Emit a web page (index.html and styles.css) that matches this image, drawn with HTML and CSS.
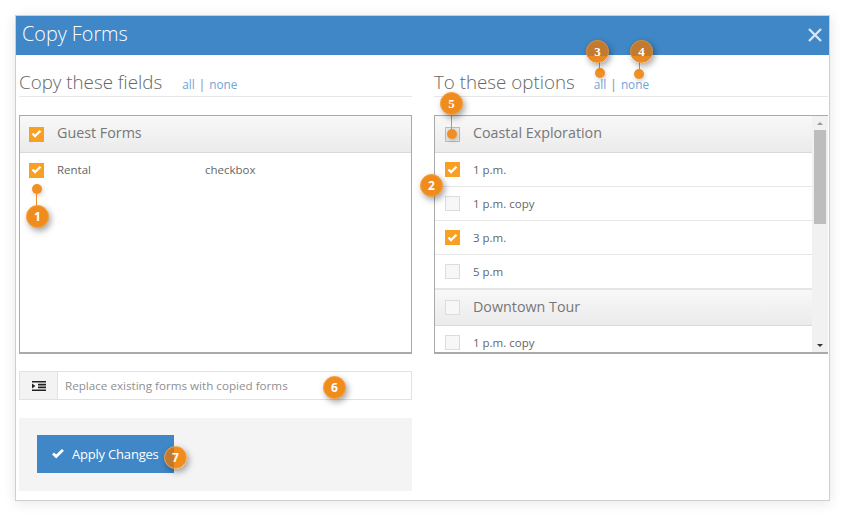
FILE: index.html
```html
<!DOCTYPE html>
<html lang="en">
<head>
<meta charset="utf-8">
<title>Copy Forms</title>
<link rel="stylesheet" href="styles.css">
</head>
<body>
<svg width="0" height="0" class="defs">
  <symbol id="tick" viewBox="0 0 14 14"><path d="M1.8 7.4 5.4 11 12.2 4.2 10.4 2.6 5.4 7.5 3.5 5.7Z" fill="currentColor"/></symbol>
</svg>
<main class="dialog">
  <header class="titlebar">
    <h1 class="title">Copy Forms</h1>
    <svg class="close" width="16" height="16" viewBox="0 0 16 16"><path d="M2 2 14 14M14 2 2 14" stroke="#d6e6f4" stroke-width="2.4" fill="none"/></svg>
  </header>
  <div class="content">
    <section class="col">
      <div class="col-head">
        <h2 class="col-title">Copy these fields</h2>
        <span class="links links-left"><a class="link">all</a> <span class="sep">|</span> <a class="link">none</a></span>
      </div>
      <div class="box box-left">
        <div class="group">
          <span class="check on"><svg width="14" height="14"><use href="#tick"/></svg></span>
          <span class="group-name">Guest Forms</span>
        </div>
        <div class="row row-plain">
          <span class="check on"><svg width="14" height="14"><use href="#tick"/></svg></span>
          <span class="row-name row-name-wide">Rental</span>
          <span class="row-name">checkbox</span>
        </div>
      </div>
      <div class="select">
        <span class="select-icon">
          <svg width="14" height="10" viewBox="0 0 14 10"><path d="M0 0H14V1.6H0ZM6 2.8H14V4.4H6ZM6 5.6H14V7.2H6ZM0 8.4H14V10H0ZM0 2.6 3.4 5 0 7.4Z" fill="#222"/></svg>
        </span>
        <span class="select-text">Replace existing forms with copied forms</span>
      </div>
      <div class="actions">
        <button class="apply" type="button">
          <svg width="16" height="16"><use href="#tick"/></svg>
          <span>Apply Changes</span>
        </button>
      </div>
    </section>
    <section class="col">
      <div class="col-head">
        <h2 class="col-title">To these options</h2>
        <span class="links links-right"><a class="link">all</a> <span class="sep">|</span> <a class="link">none</a></span>
      </div>
      <div class="box box-right">
        <div class="list">
          <div class="group">
            <span class="check check-dark"></span>
            <span class="group-name">Coastal Exploration</span>
          </div>
          <div class="row"><span class="check on"><svg width="14" height="14"><use href="#tick"/></svg></span><span class="row-name">1 p.m.</span></div>
          <div class="row"><span class="check"></span><span class="row-name">1 p.m. copy</span></div>
          <div class="row"><span class="check on"><svg width="14" height="14"><use href="#tick"/></svg></span><span class="row-name">3 p.m.</span></div>
          <div class="row"><span class="check"></span><span class="row-name">5 p.m</span></div>
          <div class="group group-next">
            <span class="check"></span>
            <span class="group-name">Downtown Tour</span>
          </div>
          <div class="row"><span class="check"></span><span class="row-name">1 p.m. copy</span></div>
        </div>
        <div class="scrollbar">
          <span class="arrow arrow-up"></span>
          <span class="thumb"></span>
          <span class="arrow arrow-down"></span>
        </div>
      </div>
    </section>
  </div>

  <span class="pin pin-1"></span>
  <span class="stem stem-1"></span>
  <span class="badge badge-1">1</span>
  <span class="badge badge-2">2</span>
  <span class="stem stem-3"></span>
  <span class="pin pin-3"></span>
  <span class="badge badge-3">3</span>
  <span class="stem stem-4"></span>
  <span class="pin pin-4"></span>
  <span class="badge badge-4">4</span>
  <span class="stem stem-5"></span>
  <span class="pin pin-5"></span>
  <span class="badge badge-5">5</span>
  <span class="badge badge-6">6</span>
  <span class="badge badge-7">7</span>
</main>
</body>
</html>
```
FILE: styles.css
```css
* { box-sizing: border-box; }
html, body { margin: 0; padding: 0; background: #fff; }
body { width: 845px; height: 516px; overflow: hidden; font-family: "Open Sans", "Liberation Sans", sans-serif; }
.defs { position: absolute; }

.dialog {
  position: relative;
  width: 815px;
  height: 486px;
  margin: 15px 0 0 15px;
  background: #fff;
  border: 1px solid #cfcfcf;
  box-shadow: 0 2px 12px rgba(0, 0, 0, .10);
}
.titlebar {
  height: 39px;
  background: #3f87c7;
  display: flex;
  align-items: center;
  justify-content: space-between;
  padding: 0 6px 0 6px;
}
.title { margin: 0; font-size: 19.8px; font-weight: 300; color: #fff; line-height: 34px; position: relative; top: -2px; }
.close { position: relative; top: -1px; }

.content { display: flex; gap: 22px; padding: 0 1px 0 3px; }
.col { width: 393px; flex: none; }
.col:last-child { width: 394px; }
.col-head { height: 42px; border-bottom: 1px solid #e6e6e6; display: flex; align-items: flex-end; }
.col-title { margin: 0; font-size: 18.75px; font-weight: 300; color: #666; line-height: 30px; position: relative; top: 1px; }
.links { font-size: 11.8px; line-height: 20px; color: #888; white-space: nowrap; position: relative; top: -2px; }
.links-left { margin-left: 20px; }
.links-right { margin-left: 19px; }
.link { color: #6fa5d6; }
.sep { margin: 0 1px; }

.box { margin-top: 18px; height: 239px; border: 1px solid #aaa; border-bottom-width: 2px; }
.box-right { display: flex; overflow: hidden; border-right: 0; }

.group {
  height: 37px;
  display: flex;
  align-items: center;
  padding-left: 9px;
  background: linear-gradient(#f8f8f8, #ebebeb);
  border-bottom: 1px solid #d9d9d9;
}
.group-next { border-top: 1px solid #e4e4e4; }
.group-name { margin: 0 0 3px 13px; font-size: 14.3px; color: #777; }
.list { flex: 1; min-width: 0; }
.box-right .group { padding-left: 10px; }
.row {
  height: 34px;
  display: flex;
  align-items: center;
  padding-left: 10px;
  border-bottom: 1px solid #e6e6e6;
}
.row-plain { border-bottom: 0; padding-left: 9px; }
.row-name { margin: 0 0 1px 13px; font-size: 11.5px; color: #666; }
.row-name-wide { width: 135px; }

.check {
  width: 15px;
  height: 15px;
  flex: none;
  display: flex;
  align-items: center;
  justify-content: center;
  border: 1px solid #dcdcdc;
  background: #f7f7f7;
}
.check.on { background: #f7a024; border-color: #f7a024; color: #fff; }
.check-dark { border-color: #bbb; background: #e6e6e6; }

.scrollbar { width: 16px; flex: none; background: #f1f1f1; display: flex; flex-direction: column; align-items: center; }
.thumb { width: 12px; height: 94px; background: #bdbdbd; margin-top: 5px; }
.arrow { width: 0; height: 0; border-left: 3px solid transparent; border-right: 3px solid transparent; }
.arrow-up { border-bottom: 3px solid #999; margin-top: 6px; }
.arrow-down { border-top: 3px solid #333; margin-top: auto; margin-bottom: 5px; }

.select {
  margin-top: 17px;
  height: 29px;
  display: flex;
  border: 1px solid #e2e2e2;
}
.select-icon { width: 38px; flex: none; display: flex; align-items: center; justify-content: center; background: #f3f3f3; border-right: 1px solid #e2e2e2; }
.select-text { padding-left: 7px; font-size: 11.65px; line-height: 27px; color: #8f8f8f; }

.actions { margin-top: 18px; height: 73px; background: #f4f4f4; padding: 17px 0 0 18px; }
.apply {
  width: 137px;
  height: 38px;
  padding: 0 0 0 13px;
  border: 0;
  background: #3f87c7;
  color: #fff;
  display: flex;
  align-items: center;
  gap: 6px;
  font: 400 13px "Open Sans", "Liberation Sans", sans-serif;
  letter-spacing: -.2px;
}

.badge {
  position: absolute;
  width: 23px;
  height: 23px;
  border-radius: 50%;
  background: #f08c1e;
  border: 1px solid #f9a13c;
  color: #fff;
  font: 700 13px/21px "Liberation Serif", serif;
  text-align: center;
  box-shadow: 2px 3px 6px rgba(0, 0, 0, .35);
}
.pin { position: absolute; width: 10px; height: 10px; border-radius: 50%; background: #f28f22; box-shadow: 1px 2px 4px rgba(0, 0, 0, .2); }
.stem { position: absolute; width: 1px; background: #f28f22; }

.badge-1 { left: 10px; top: 189px; font-family: "Open Sans", sans-serif; font-size: 12px; }
.pin-1 { left: 16px; top: 168px; }
.stem-1 { left: 20px; top: 176px; height: 15px; }
.badge-2 { left: 404px; top: 158px; font-family: "Open Sans", sans-serif; font-size: 12px; }
.badge-3 { left: 570px; top: 24px; background: linear-gradient(#c17a2e 70%, #e88a24 70%); border: 1px solid #f08c1e; }
.pin-3 { left: 579px; top: 52px; }
.stem-3 { left: 583px; top: 45px; height: 10px; }
.badge-4 { left: 614px; top: 24px; background: linear-gradient(#c17a2e 70%, #e88a24 70%); border: 1px solid #f08c1e; }
.pin-4 { left: 618px; top: 53px; }
.stem-4 { left: 623px; top: 45px; height: 10px; }
.badge-5 { left: 424px; top: 76px; }
.pin-5 { left: 431px; top: 113px; }
.stem-5 { left: 435px; top: 98px; height: 18px; }
.badge-6 { left: 307px; top: 360px; font-family: "Open Sans", sans-serif; font-size: 12px; }
.badge-7 { left: 148px; top: 430px; font-family: "Open Sans", sans-serif; font-size: 12px; background: linear-gradient(90deg, #c17a2e 44%, #f08c1e 44%); }
```
